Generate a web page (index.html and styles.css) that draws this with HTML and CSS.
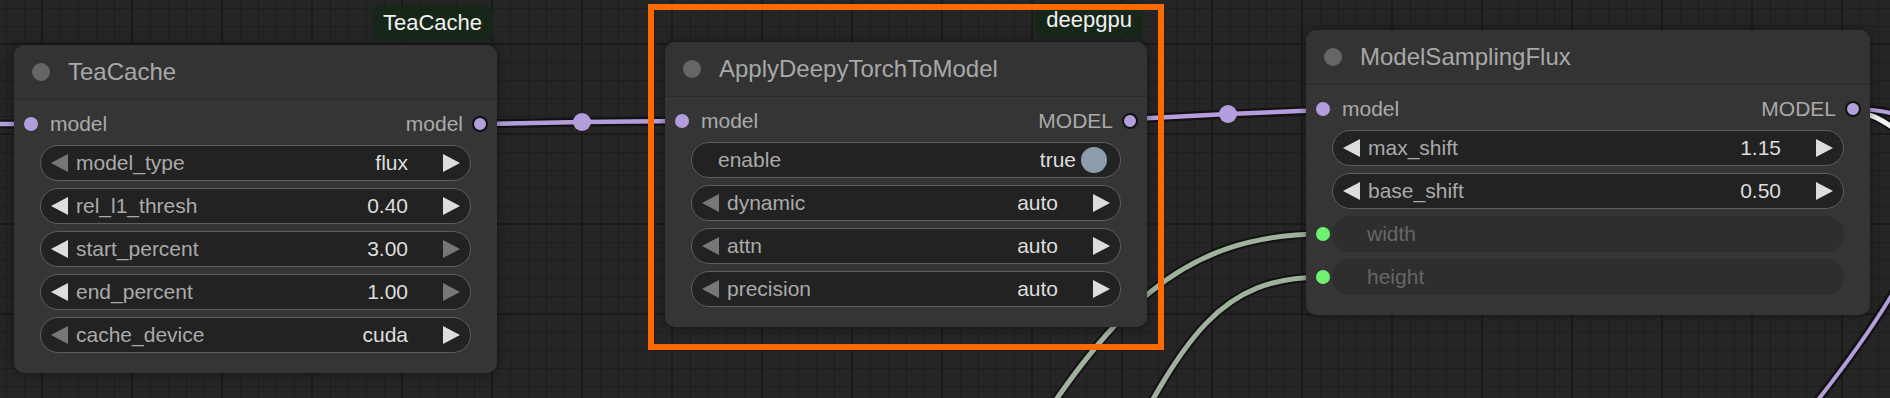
FILE: index.html
```html
<!DOCTYPE html>
<html lang="en">
<head>
    <meta charset="UTF-8">
    <meta name="viewport" content="width=device-width, initial-scale=1.0">
    <title>ComfyUI graph</title>
    <link rel="stylesheet" href="styles.css">
</head>
<body>
    <div class="canvas">
        <!-- links sit under the nodes -->
        <svg class="links" width="1890" height="398" viewBox="0 0 1890 398">
            <g class="link-border">
                <path d="M -10 124 L 32 124"></path>
                <path d="M 481 124 L 582 122 L 682 121"></path>
                <path d="M 1132 119 L 1228 114 L 1323 110"></path>
                <path d="M 1010 470 C 1110 310 1180 234 1323 234"></path>
                <path d="M 1115 470 C 1185 335 1220 277 1323 277"></path>
                <path d="M 1855 113 C 1870 113 1882 119 1900 133"></path>
                <path d="M 1853 109 C 2000 109 1950 250 1760 470"></path>
            </g>
            <g class="link-purple">
                <path d="M -10 124 L 32 124"></path>
                <path d="M 481 124 L 582 122 L 682 121"></path>
                <path d="M 1132 119 L 1228 114 L 1323 110"></path>
            </g>
            <g class="link-green">
                <path d="M 1010 470 C 1110 310 1180 234 1323 234"></path>
                <path d="M 1115 470 C 1185 335 1220 277 1323 277"></path>
            </g>
            <path class="link-white" d="M 1855 113 C 1870 113 1882 119 1900 133"></path>
            <path class="link-thin" d="M 1853 109 C 2000 109 1950 250 1760 470"></path>
            <circle class="link-dot" cx="582" cy="122" r="9"></circle>
            <circle class="link-dot" cx="1228" cy="114" r="9"></circle>
        </svg>

        <div class="node node-teacache">
            <div class="badge">TeaCache</div>
            <div class="node-title"><span class="title-dot"></span>TeaCache</div>
            <div class="node-body">
                <div class="slot-row">
                    <div class="slot slot-in"><span class="pin"></span>model</div>
                    <div class="slot slot-out">model<span class="pin pin-ring"></span></div>
                </div>
                <div class="widget">
                    <span class="arrow arrow-left dim"></span>
                    <span class="w-label">model_type</span>
                    <span class="w-value">flux</span>
                    <span class="arrow arrow-right"></span>
                </div>
                <div class="widget">
                    <span class="arrow arrow-left"></span>
                    <span class="w-label">rel_l1_thresh</span>
                    <span class="w-value">0.40</span>
                    <span class="arrow arrow-right"></span>
                </div>
                <div class="widget">
                    <span class="arrow arrow-left"></span>
                    <span class="w-label">start_percent</span>
                    <span class="w-value">3.00</span>
                    <span class="arrow arrow-right dim"></span>
                </div>
                <div class="widget">
                    <span class="arrow arrow-left"></span>
                    <span class="w-label">end_percent</span>
                    <span class="w-value">1.00</span>
                    <span class="arrow arrow-right dim"></span>
                </div>
                <div class="widget">
                    <span class="arrow arrow-left dim"></span>
                    <span class="w-label">cache_device</span>
                    <span class="w-value">cuda</span>
                    <span class="arrow arrow-right"></span>
                </div>
            </div>
        </div>

        <div class="node node-deepy">
            <div class="badge">deepgpu</div>
            <div class="node-title"><span class="title-dot"></span>ApplyDeepyTorchToModel</div>
            <div class="node-body">
                <div class="slot-row">
                    <div class="slot slot-in"><span class="pin"></span>model</div>
                    <div class="slot slot-out">MODEL<span class="pin pin-ring"></span></div>
                </div>
                <div class="widget toggle">
                    <span class="w-label">enable</span>
                    <span class="w-value">true</span>
                    <span class="knob"></span>
                </div>
                <div class="widget">
                    <span class="arrow arrow-left dim"></span>
                    <span class="w-label">dynamic</span>
                    <span class="w-value">auto</span>
                    <span class="arrow arrow-right"></span>
                </div>
                <div class="widget">
                    <span class="arrow arrow-left dim"></span>
                    <span class="w-label">attn</span>
                    <span class="w-value">auto</span>
                    <span class="arrow arrow-right"></span>
                </div>
                <div class="widget">
                    <span class="arrow arrow-left dim"></span>
                    <span class="w-label">precision</span>
                    <span class="w-value">auto</span>
                    <span class="arrow arrow-right"></span>
                </div>
            </div>
        </div>

        <div class="node node-sampling">
            <div class="node-title"><span class="title-dot"></span>ModelSamplingFlux</div>
            <div class="node-body">
                <div class="slot-row">
                    <div class="slot slot-in"><span class="pin"></span>model</div>
                    <div class="slot slot-out">MODEL<span class="pin pin-ring"></span></div>
                </div>
                <div class="widget">
                    <span class="arrow arrow-left"></span>
                    <span class="w-label">max_shift</span>
                    <span class="w-value">1.15</span>
                    <span class="arrow arrow-right"></span>
                </div>
                <div class="widget">
                    <span class="arrow arrow-left"></span>
                    <span class="w-label">base_shift</span>
                    <span class="w-value">0.50</span>
                    <span class="arrow arrow-right"></span>
                </div>
                <div class="widget disabled">
                    <span class="pin pin-int"></span>
                    <span class="w-label">width</span>
                </div>
                <div class="widget disabled">
                    <span class="pin pin-int"></span>
                    <span class="w-label">height</span>
                </div>
            </div>
        </div>

        <div class="selection"></div>
    </div>
</body>
</html>
```

FILE: styles.css
```css
* {
    box-sizing: border-box;
}

body {
    margin: 0;
    background-color: #242424;
    font-family: 'Liberation Sans', Arial, Helvetica, sans-serif;
}

.canvas {
    position: relative;
    width: 1890px;
    height: 398px;
    overflow: hidden;
    background-color: #252525;
    background-image:
        linear-gradient(#1a1a1a 2px, transparent 2px),
        linear-gradient(90deg, #1a1a1a 2px, transparent 2px),
        linear-gradient(#1e1e1e 1px, transparent 1px),
        linear-gradient(90deg, #1e1e1e 1px, transparent 1px);
    background-size: 90px 90px, 90px 90px, 18px 18px, 18px 18px;
    background-position: 0 43px, 41px 0, 0 8px, 6px 0;
}

/* links */
.links {
    position: absolute;
    left: 0;
    top: 0;
}

.links path {
    fill: none;
    stroke-linecap: round;
    stroke-linejoin: round;
}

.link-border path {
    stroke: #121212;
    stroke-width: 9;
}

.link-purple path {
    stroke: #b39ddb;
    stroke-width: 4.5;
}

.link-green path {
    stroke: #9fb29c;
    stroke-width: 5;
}

.link-white {
    stroke: #f2f2f2;
    stroke-width: 5;
}

.links .link-thin {
    stroke: #b39ddb;
    stroke-width: 4;
}

.link-dot {
    fill: #b39ddb;
}

/* nodes */
.node {
    position: absolute;
    background-color: #353535;
    border-radius: 10px;
    box-shadow: 0 0 8px rgba(0, 0, 0, 0.45);
    color: #aaa;
}

.node-teacache {
    left: 14px;
    top: 45px;
    width: 483px;
}

.node-deepy {
    left: 665px;
    top: 42px;
    width: 482px;
}

.node-sampling {
    left: 1306px;
    top: 30px;
    width: 564px;
}

.badge {
    position: absolute;
    right: 4px;
    bottom: calc(100% + 4px);
    height: 36px;
    padding: 0 11px;
    display: flex;
    align-items: center;
    background-color: #16271a;
    border-radius: 8px;
    color: #f2f2f2;
    font-size: 22px;
}

.node-title {
    height: 55px;
    display: flex;
    align-items: center;
    gap: 18px;
    padding-left: 18px;
    border-bottom: 1px solid #2a2a2a;
    border-radius: 10px 10px 0 0;
    background-color: #333;
    color: #a8a8a8;
    font-size: 24px;
}

.title-dot {
    width: 18px;
    height: 18px;
    border-radius: 50%;
    background-color: #666;
}

.node-body {
    display: flex;
    flex-direction: column;
    gap: 7px;
    padding: 7px 26px 20px;
}

.slot-row {
    height: 34px;
    margin: 0 -17px -3px -16px;
    display: flex;
    align-items: center;
    justify-content: space-between;
    font-size: 21px;
    color: #aaa;
}

.slot {
    display: flex;
    align-items: center;
}

.slot-in {
    gap: 12px;
}

.slot-out {
    gap: 9px;
}

.pin {
    width: 14px;
    height: 14px;
    border-radius: 50%;
    background-color: #b39ddb;
}

.pin-ring {
    width: 16px;
    height: 16px;
    border: 2px solid #111;
}

.pin-int {
    position: absolute;
    left: -17px;
    top: 50%;
    transform: translateY(-50%);
    background-color: #70f070;
}

/* widgets */
.widget {
    position: relative;
    height: 36px;
    display: flex;
    align-items: center;
    padding: 0 10px;
    border: 1px solid #5e5e5e;
    border-radius: 18px;
    background-color: #222;
    font-size: 21px;
}

.w-label {
    margin-left: 8px;
    color: #aaa;
}

.w-value {
    margin-left: auto;
    color: #ddd;
}

.arrow {
    width: 0;
    height: 0;
    border-top: 9px solid transparent;
    border-bottom: 9px solid transparent;
}

.arrow-left {
    border-right: 17px solid #ddd;
}

.arrow-right {
    margin-left: 35px;
    border-left: 17px solid #ddd;
}

.arrow-left.dim {
    border-right-color: #777;
}

.arrow-right.dim {
    border-left-color: #777;
}

.toggle {
    padding: 0 13px 0 26px;
}

.toggle .w-label {
    margin-left: 0;
}

.knob {
    width: 26px;
    height: 26px;
    margin-left: 5px;
    border-radius: 50%;
    background-color: #8b9cad;
}

.disabled {
    padding-left: 26px;
    border-color: transparent;
    background-color: #2e2e2e;
}

.disabled .w-label {
    color: #666;
}

/* selected node outline */
.selection {
    position: absolute;
    left: 648px;
    top: 4px;
    width: 516px;
    height: 346px;
    border: 6px solid #ff6a00;
}
```
